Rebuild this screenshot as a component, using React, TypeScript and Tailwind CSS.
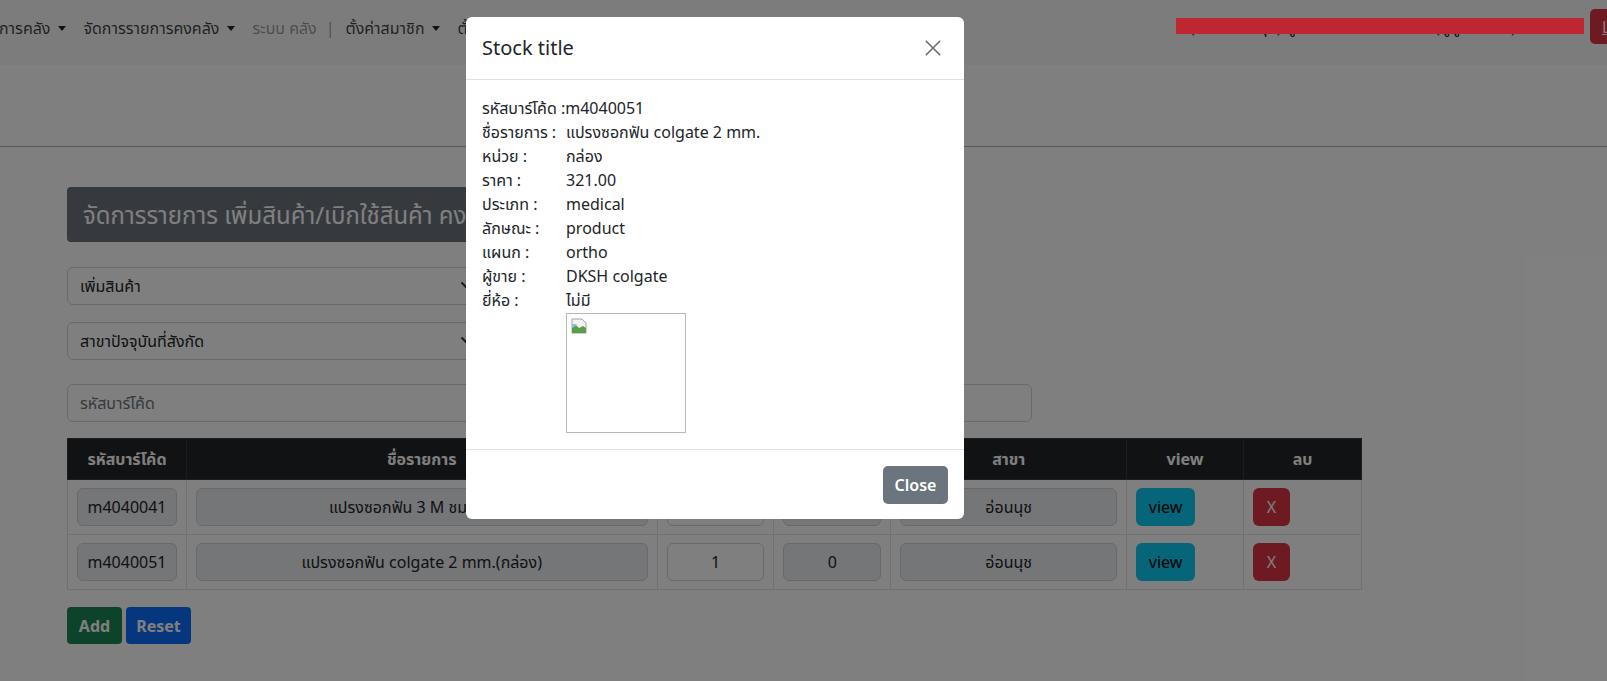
import React from 'react';

const navItems = [
  { label: 'การคลัง', caret: true, gap: 'ml-[-1px]' },
  { label: 'จัดการรายการคงคลัง', caret: true, gap: 'ml-[17px]' },
  { label: 'ระบบ คลัง', muted: true, gap: 'ml-[17px]' },
  { label: '|', muted: true, gap: 'ml-[9px]' },
  { label: 'ตั้งค่าสมาชิก', caret: true, gap: 'ml-[11px]' },
  { label: 'ตั้งค่าระบบ', caret: true, gap: 'ml-[17px]' },
];

const details: [string, string][] = [
  ['ชื่อรายการ :', 'แปรงซอกฟัน colgate 2 mm.'],
  ['หน่วย :', 'กล่อง'],
  ['ราคา :', '321.00'],
  ['ประเภท :', 'medical'],
  ['ลักษณะ :', 'product'],
  ['แผนก :', 'ortho'],
  ['ผู้ขาย :', 'DKSH colgate'],
  ['ยี่ห้อ :', 'ไม่มี'],
];

const rows = [
  { code: 'm4040041', name: 'แปรงซอกฟัน 3 M ชมพู(ซอง)', qty: '1', stock: '0', branch: 'อ่อนนุช' },
  { code: 'm4040051', name: 'แปรงซอกฟัน colgate 2 mm.(กล่อง)', qty: '1', stock: '0', branch: 'อ่อนนุช' },
];

const Caret = () => (
  <span className="ml-[8px] inline-block h-0 w-0 border-x-[4px] border-t-[5px] border-x-transparent border-t-[#212529] align-middle" />
);

const Chevron = () => (
  <svg width="16" height="16" viewBox="0 0 16 16" className="absolute right-[12px] top-1/2 -translate-y-1/2">
    <path fill="none" stroke="#343a40" strokeLinecap="round" strokeLinejoin="round" strokeWidth="2" d="m2 5 6 6 6-6" />
  </svg>
);

const Field = ({ value, readOnly = true }: { value: string; readOnly?: boolean }) => (
  <div
    className={`flex h-[38px] items-center justify-center rounded-[6px] border border-[#ced4da] text-[16px] text-[#212529] ${
      readOnly ? 'bg-[#e9ecef]' : 'bg-white'
    }`}
  >
    {value}
  </div>
);

const cols: [string, string][] = [
  ['รหัสบาร์โค้ด', 'w-[119px]'],
  ['ชื่อรายการ', 'w-[471px]'],
  ['จำนวน', 'w-[117px]'],
  ['คงเหลือ', 'w-[117px]'],
  ['สาขา', 'w-[236px]'],
  ['view', 'w-[117px]'],
  ['ลบ', 'w-[118px]'],
];

export default function App() {
  return (
    <div className="relative h-[681px] w-[1607px] overflow-hidden bg-white font-['Noto_Sans','Noto_Sans_Thai',sans-serif] text-[#212529]">
      {/* navbar */}
      <div className="relative h-[65px] bg-[#f8f9fa]">
        <div className="flex items-center pt-[16px] text-[16px] text-[rgba(0,0,0,0.75)]">
          {navItems.map((n, i) => (
            <span
              key={i}
              className={`flex items-center whitespace-nowrap ${n.gap} ${n.muted ? 'text-[rgba(0,0,0,0.4)]' : ''}`}
            >
              {n.label}
              {n.caret && <Caret />}
            </span>
          ))}
        </div>
        <div className="absolute left-[1190px] top-[15px] whitespace-nowrap text-[16px] text-[#212529]">
          (สาขา อ่อนนุช) ผู้ใช้งาน : admin ระบบ (ผู้ดูแลระบบ)
        </div>
        <div className="absolute left-[1590px] top-[9px] flex h-[35px] w-[80px] items-center rounded-[5px] bg-[#dc3545] pl-[12px] text-[16px] text-white underline">
          Logout
        </div>
      </div>

      <div className="h-[82px] border-b border-[#adb5bd]" />

      {/* content */}
      <div className="pl-[67px] pt-[40px]">
        <div className="flex h-[55px] w-[700px] items-center rounded-[4px] bg-[#6c757d] px-[16px] text-[24px] text-white">
          จัดการรายการ เพิ่มสินค้า/เบิกใช้สินค้า คงคลัง
        </div>

        <div className="relative mt-[25px] flex h-[38px] w-[422px] items-center rounded-[6px] border border-[#ced4da] bg-white px-[12px] text-[16px]">
          เพิ่มสินค้า
          <Chevron />
        </div>
        <div className="relative mt-[17px] flex h-[38px] w-[422px] items-center rounded-[6px] border border-[#ced4da] bg-white px-[12px] text-[16px]">
          สาขาปัจจุบันที่สังกัด
          <Chevron />
        </div>

        <div className="mt-[24px] flex h-[38px] w-[965px] items-center rounded-[6px] border border-[#ced4da] bg-white px-[12px] text-[16px] text-[#6c757d]">
          รหัสบาร์โค้ด
        </div>

        <table className="mt-[16px] w-[1295px] border-collapse text-[16px]">
          <thead>
            <tr className="h-[41px] bg-[#212529] text-white">
              {cols.map(([h, w]) => (
                <th key={h} className={`${w} border border-[#373b3e] font-bold`}>
                  {h}
                </th>
              ))}
            </tr>
          </thead>
          <tbody>
            {rows.map((r) => (
              <tr key={r.code} className="h-[55px]">
                <td className="border border-[#dee2e6] px-[9px]">
                  <Field value={r.code} />
                </td>
                <td className="border border-[#dee2e6] px-[9px]">
                  <Field value={r.name} />
                </td>
                <td className="border border-[#dee2e6] px-[9px]">
                  <Field value={r.qty} readOnly={false} />
                </td>
                <td className="border border-[#dee2e6] px-[9px]">
                  <Field value={r.stock} />
                </td>
                <td className="border border-[#dee2e6] px-[9px]">
                  <Field value={r.branch} />
                </td>
                <td className="border border-[#dee2e6] px-[9px]">
                  <div className="flex h-[38px] w-[59px] items-center justify-center rounded-[6px] bg-[#0dcaf0] text-[16px] text-black">
                    view
                  </div>
                </td>
                <td className="border border-[#dee2e6] px-[9px]">
                  <div className="flex h-[38px] w-[37px] items-center justify-center rounded-[6px] bg-[#dc3545] text-[16px] text-white">
                    X
                  </div>
                </td>
              </tr>
            ))}
          </tbody>
        </table>

        <div className="mt-[17px] flex gap-[4px]">
          <div className="flex h-[37px] w-[55px] items-center justify-center rounded-[4px] bg-[#198754] text-[16px] font-bold text-white">
            Add
          </div>
          <div className="flex h-[37px] w-[65px] items-center justify-center rounded-[4px] bg-[#0d6efd] text-[16px] font-bold text-white">
            Reset
          </div>
        </div>
      </div>

      {/* backdrop */}
      <div className="absolute inset-0 bg-black/50" />

      {/* red bar above backdrop */}
      <div className="absolute left-[1176px] top-[18px] h-[16px] w-[408px] bg-[#be2731]" />

      {/* modal */}
      <div className="absolute left-[466px] top-[17px] w-[498px] rounded-[6px] bg-white">
        <div className="flex h-[63px] items-center justify-between border-b border-[#dee2e6] px-[16px]">
          <span className="text-[20px] font-normal text-[#212529]">Stock title</span>
          <svg width="18" height="18" viewBox="0 0 16 16" className="mr-[6px]">
            <path d="M2 2 14 14M14 2 2 14" stroke="#6f6f6f" strokeWidth="1.5" strokeLinecap="round" />
          </svg>
        </div>
        <div className="px-[16px] py-[16px] text-[16px] leading-[24px] text-[#212529]">
          <div>รหัสบาร์โค้ด :m4040051</div>
          {details.map(([k, v]) => (
            <div key={k} className="flex">
              <span className="w-[84px] shrink-0">{k}</span>
              <span>{v}</span>
            </div>
          ))}
          <div className="ml-[84px] mt-[1px] h-[120px] w-[120px] border border-[#b8b8b8] p-[4px]">
            <svg width="16" height="16" viewBox="0 0 16 16">
              <path d="M1 1h10l4 4v10H1z" fill="#f3f3f3" stroke="#9aa3ad" strokeWidth="1" />
              <path d="M1 10l4-3 3 3 4-2 3 2v5H1z" fill="#5aa04a" />
              <path d="M1 6h5l-5 4z" fill="#8fbce6" />
            </svg>
          </div>
        </div>
        <div className="flex h-[70px] items-center justify-end border-t border-[#dee2e6] px-[16px]">
          <div className="flex h-[38px] w-[65px] items-center justify-center rounded-[5px] bg-[#6c757d] text-[16px] font-semibold text-white">
            Close
          </div>
        </div>
      </div>
    </div>
  );
}
